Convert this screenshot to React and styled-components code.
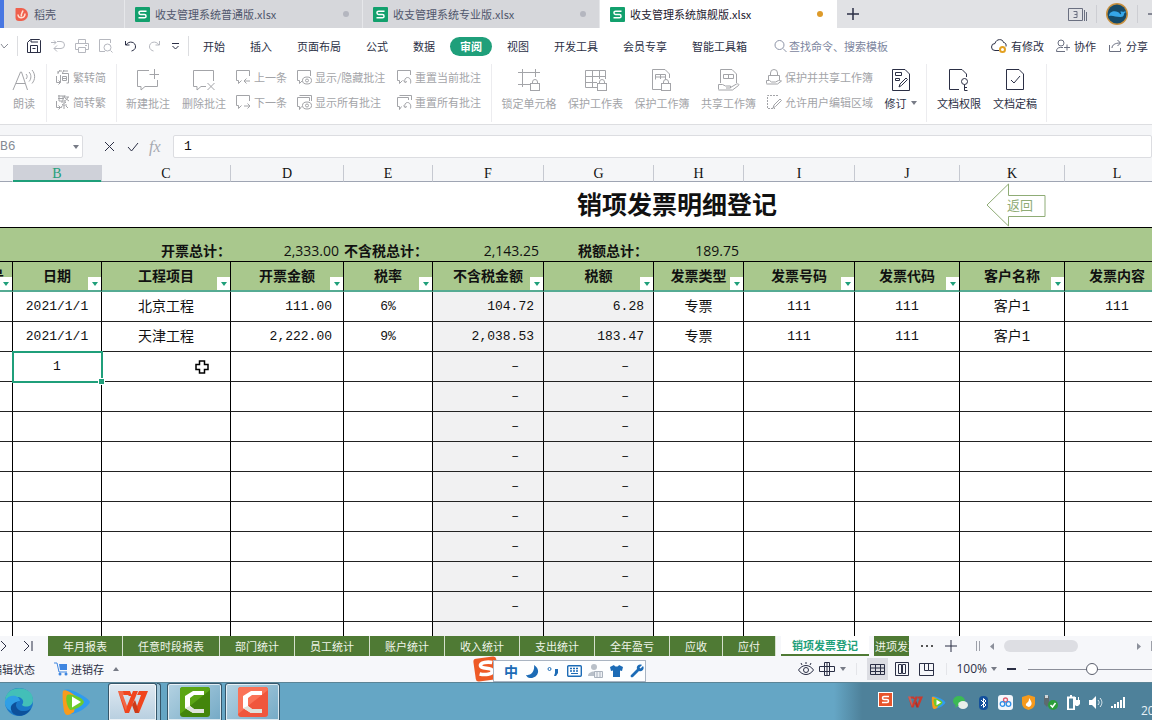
import React from "react";
import styled, { createGlobalStyle, css } from "styled-components";

const Global = createGlobalStyle`
  *, *::before, *::after { box-sizing: border-box; }
  body { margin: 0; font-family: "Noto Sans CJK SC", sans-serif; font-size: 11px; line-height: 16px; color: #2b2f45; background: #fff; }
  button, input { font: inherit; color: inherit; border: 0; background: none; padding: 0; margin: 0; }
  button { white-space: nowrap; }
  svg { display: block; flex: none; }
`;

const teal = "#1f9f7a";
const sheetGreen = "#4f7a34";
const headGreen = "#a9c88d";
const mono = `"Liberation Mono", "Noto Sans CJK SC", monospace`;

const Page = styled.div`
  display: flex;
  flex-direction: column;
  height: 100vh;
  overflow: hidden;
  white-space: nowrap;
`;

/* ---------- document tabs ---------- */
const TabBar = styled.header`
  display: flex;
  flex: none;
  height: 28px;
  background: #e1e2e5;
`;
const HomeEdge = styled.div`
  flex: none;
  width: 4px;
  background: #4877e2;
`;
const DocTab = styled.button`
  display: flex;
  flex: none;
  align-items: center;
  gap: 5px;
  width: ${(p) => p.$width}px;
  padding: 0 13px 0 10px;
  border-right: 1px solid ${(p) => (p.$active ? "#fff" : "#e6e7ea")};
  background: ${(p) => (p.$active ? "#fff" : "#d6d7db")};
  color: ${(p) => (p.$active ? "#1d2030" : "#50566c")};
`;
const Dot = styled.span`
  width: 6px;
  height: 6px;
  margin-left: auto;
  border-radius: 50%;
  background: ${(p) => p.$color};
`;
const AddTab = styled.button`
  display: grid;
  place-items: center;
  width: 32px;
`;
const WindowTools = styled.div`
  display: flex;
  align-items: center;
  margin-left: auto;
  gap: 8px;
`;
const Rule = styled.span`
  flex: none;
  width: 1px;
  height: ${(p) => p.$h}px;
  background: ${(p) => p.$color || "#dcdde0"};
`;

/* ---------- menu ---------- */
const MenuRow = styled.nav`
  display: flex;
  flex: none;
  align-items: center;
  height: 36px;
`;
const QuickTools = styled.div`
  display: flex;
  align-items: center;
  gap: 8px;
  padding-left: 8px;
`;
const IconButton = styled.button`
  display: grid;
  place-items: center;
  width: ${(p) => p.$w || 16}px;
  height: ${(p) => p.$h || 20}px;
  background: ${(p) => (p.$on ? "#dcdde3" : "none")};
`;
const MenuItems = styled.div`
  display: flex;
  gap: 5px;
  padding-left: 4px;
`;
const MenuItem = styled.button`
  height: 19px;
  padding: 0 10px;
  border-radius: 10px;
  line-height: 18px;
  ${(p) => p.$active && css`background: ${teal}; color: #fff; font-weight: 700;`}
`;
const Search = styled.label`
  display: flex;
  align-items: center;
  gap: 2px;
  margin-left: 17px;
  input { width: 110px; height: 20px; }
  input::placeholder { color: #7c859e; opacity: 1; }
`;
const Share = styled.div`
  display: flex;
  gap: 12px;
  margin-left: auto;
  padding-right: 4px;
`;
const ShareButton = styled.button`
  display: flex;
  align-items: center;
  gap: 4px;
`;

/* ---------- ribbon ---------- */
const Ribbon = styled.section`
  display: flex;
  flex: none;
  height: 61px;
  border-bottom: 1px solid #dddee1;
`;
const Group = styled.div`
  display: flex;
  flex: none;
  height: 58px;
  padding: 5px ${(p) => p.$pr || 0}px 0 ${(p) => p.$pl || 0}px;
  border-right: 1px solid #ececef;
`;
const BigButton = styled.button`
  display: flex;
  flex-direction: column;
  align-items: center;
  gap: 4px;
  width: ${(p) => p.$w}px;
  color: ${(p) => (p.$enabled ? "#2b2f45" : "#a3a4a8")};
  span { display: flex; align-items: center; gap: 4px; }
`;
const SmallStack = styled.div`
  display: flex;
  flex-direction: column;
  gap: 9px;
  width: ${(p) => p.$w}px;
  margin-left: ${(p) => p.$ml || 0}px;
`;
const SmallButton = styled.button`
  display: flex;
  align-items: center;
  gap: 3px;
  height: 16px;
  color: #a3a4a8;
`;

/* ---------- formula bar ---------- */
const FormulaBar = styled.div`
  display: flex;
  flex: none;
  height: 40px;
  padding-top: 10px;
  background: #f5f6f8;
`;
const NameBox = styled.label`
  display: flex;
  align-items: center;
  flex: none;
  width: 87px;
  height: 23px;
  margin-left: -4px;
  padding: 0 3px;
  border: 1px solid #dcdde1;
  border-radius: 2px;
  background: #fff;
  font: 13px ${mono};
  color: #858a94;
  input { flex: 1; min-width: 0; }
`;
const FormulaTools = styled.div`
  display: flex;
  align-items: center;
  gap: 8px;
  height: 23px;
  padding: 0 8px 0 18px;
`;
const Fx = styled.span`
  width: 16px;
  font: italic 16px "Liberation Serif", serif;
  color: #a6a9b0;
`;
const FormulaInput = styled.input`
  flex: 1;
  height: 23px;
  padding-left: 10px;
  border: 1px solid #dcdde1;
  border-radius: 2px;
  background: #fff;
  font: 13px ${mono};
  color: #111;
`;

/* ---------- sheet ---------- */
const SheetArea = styled.main`
  flex: 1;
  min-height: 0;
  overflow: hidden;
  background: #fff;
`;
const Sheet = styled.table`
  width: 100%;
  table-layout: fixed;
  border-collapse: separate;
  border-spacing: 0;
  color: #111;
  th, td { padding: 0; }
`;
const Letter = styled.th`
  height: 17px;
  border-right: 1px solid ${(p) => (p.$edge ? "#c6c9d1" : "transparent")};
  border-bottom: 1px solid #9fa5b3;
  background: #f5f6f8;
  font: 14px/14px "Liberation Serif", serif;
  && { padding-top: 2px; }
  ${(p) => p.$on && css`
    background: #cfd1d9;
    color: ${teal};
    border-bottom-color: ${teal};
    box-shadow: inset 0 -1px ${teal};
  `}
`;
const TitleCell = styled.td`
  height: 46px;
  border-bottom: 1px solid #000;
  font-size: 25px;
  line-height: 42px;
  font-weight: 700;
  && { padding-left: ${(p) => p.$pl || 0}px; padding-bottom: ${(p) => (p.$pl ? 3 : 0)}px; }
`;
const SumCell = styled.td`
  height: 34px;
  border-bottom: 1px solid #000;
  background: ${headGreen};
  vertical-align: bottom;
  text-align: ${(p) => p.$align || "right"};
  font: ${(p) => (p.$label ? 700 : 400)} 14px/20px "Open Sans", "Noto Sans CJK SC", sans-serif;
  && { padding-right: ${(p) => p.$pr || 0}px; }
`;
const HeadCell = styled.th`
  position: relative;
  height: 30px;
  border-right: 1px solid #000;
  border-bottom: 2px solid #56ab93;
  background: ${headGreen};
  font-size: 14px;
  line-height: 26px;
  && { padding-bottom: 2px; }
`;
const Clip = styled.div`
  display: flex;
  justify-content: flex-end;
  overflow: hidden;
  padding-right: 8px;
`;
const Filter = styled.button`
  position: absolute;
  right: 0;
  bottom: 0;
  display: grid;
  place-items: center;
  width: 13px;
  height: 13px;
  background: #fff;
`;
const Cell = styled.td`
  position: relative;
  height: 30px;
  border-right: 1px solid #000;
  border-bottom: 1px solid #222;
  background: ${(p) => (p.$shade ? "#f1f1f2" : "#fff")};
  text-align: ${(p) => (p.$right ? "right" : "center")};
  font: ${(p) => (p.$cjk ? 14 : 13)}px/28px ${mono};
  && { padding-top: 1px; padding-right: ${(p) => p.$right || 0}px; }
  ${(p) => p.$selected && css`outline: 2px solid ${teal}; outline-offset: -1px; z-index: 1;`}
`;
const Handle = styled.span`
  position: absolute;
  right: -3px;
  bottom: -3px;
  width: 5px;
  height: 5px;
  background: ${teal};
  box-shadow: 0 0 0 1px #fff;
`;
const Pointer = styled.span`
  position: absolute;
  right: 20px;
  top: 7px;
`;
const BackLink = styled.a`
  display: grid;
  width: 60px;
  height: 44px;
  margin-left: 26px;
  color: #8fac76;
  text-decoration: none;
  font: 400 13px/44px "Noto Sans CJK SC", sans-serif;
  > * { grid-area: 1 / 1; }
  span { padding-left: 21px; }
`;

/* ---------- sheet tabs ---------- */
const SheetTabs = styled.nav`
  display: flex;
  flex: none;
  align-items: stretch;
  height: 20px;
  background: #f6f7fa;
`;
const TabNav = styled.div`
  display: flex;
  align-items: center;
  gap: 13px;
  width: 48px;
`;
const SheetTab = styled.button`
  flex: none;
  overflow: hidden;
  padding: 0 15px;
  border-right: 1px solid #d5e0cd;
  background: ${sheetGreen};
  color: #eff5ea;
  line-height: 20px;
  ${(p) => p.$active && css`
    margin: 0 5px;
    padding: 0 11px;
    border-right: 0;
    border-bottom: 2px solid ${sheetGreen};
    background: #fff;
    color: ${teal};
    font-weight: 700;
    line-height: 18px;
  `}
  ${(p) => p.$cut && css`
    width: 35px;
    padding: 0 0 0 1px;
    border-right: 0;
    text-align: left;
  `}
`;
const TabTools = styled.div`
  display: flex;
  align-items: center;
  gap: 11px;
  padding-left: 12px;
`;
const Scroller = styled.div`
  display: flex;
  flex: 1;
  align-items: center;
  gap: 8px;
  margin-left: 19px;
`;
const Track = styled.div`
  flex: 1;
  height: 12px;
`;
const Thumb = styled.div`
  width: 60%;
  height: 12px;
  border-radius: 6px;
  background: #dddee3;
`;

/* ---------- status bar ---------- */
const StatusBar = styled.footer`
  position: relative;
  display: flex;
  flex: none;
  align-items: center;
  height: 26px;
  background: #f6f7fa;
`;
const StatusText = styled.span`
  margin-left: -9px;
`;
const Stock = styled.button`
  display: flex;
  align-items: center;
  gap: 3px;
  margin-left: 19px;
  svg:last-child { margin-left: 6px; }
`;
const ViewTools = styled.div`
  display: flex;
  align-items: center;
  gap: 5px;
  margin-left: auto;
`;
const Zoom = styled.label`
  display: flex;
  align-items: center;
  font-family: "Open Sans", sans-serif;
  font-size: 12px;
  gap: 4px;
`;
const Slider = styled.input`
  appearance: none;
  width: 124px;
  height: 14px;
  margin-left: 3px;
  background: linear-gradient(#8b8e99, #8b8e99) center / 100% 1px no-repeat;
  &::-webkit-slider-thumb {
    appearance: none;
    width: 12px;
    height: 12px;
    border: 1px solid #5a5e6c;
    border-radius: 50%;
    background: #fff;
  }
`;
const ImeBar = styled.div`
  position: absolute;
  left: 473px;
  top: 0;
  z-index: 2;
  display: flex;
  align-items: center;
  height: 26px;
`;
const ImeTools = styled.div`
  display: flex;
  align-items: center;
  gap: 5px;
  height: 22px;
  margin: 4px 0 0 -6px;
  padding-left: 9px;
  border: 1px solid #a9b4c2;
  background: #fdfeff;
  color: #1c6bb6;
`;
const ImeMode = styled.button`
  width: 16px;
  font-size: 14px;
  font-weight: 700;
`;

/* ---------- taskbar ---------- */
const TaskBar = styled.footer`
  display: flex;
  flex: none;
  justify-content: space-between;
  height: 38px;
  border-top: 1px solid #5b8496;
  background: #65a6c5;
`;
const Apps = styled.div`
  display: flex;
`;
const AppButton = styled.button`
  display: grid;
  place-items: center;
  width: ${(p) => p.$w}px;
  margin-right: ${(p) => p.$mr || 0}px;
  ${(p) => p.$framed && css`
    border: 1px solid #35566a;
    border-bottom: 0;
    border-radius: 3px 3px 0 0;
    box-shadow: inset 0 0 0 1px rgba(255, 255, 255, 0.7);
    background: ${p.$front ? "linear-gradient(#dfe9f2, #b8cfe0)" : "linear-gradient(135deg, #b4d2e2, #74aac6)"};
  `}
`;
const StackEdge = styled.span`
  width: 4px;
  margin-right: 6px;
  border: 1px solid #35566a;
  border-width: 1px 1px 0 0;
  border-radius: 0 3px 0 0;
  background: #9cc3d8;
`;
const Tray = styled.div`
  display: flex;
  width: 318px;
  padding-left: 44px;
  background: linear-gradient(90deg, #65a6c5, #4e819a 28px);
`;
const TrayIcons = styled.div`
  display: flex;
  flex: none;
  justify-content: space-between;
  align-items: center;
  width: 218px;
  height: 38px;
  margin-left: 15px;
`;
const TrayIme = styled.div`
  padding-top: 9px;
`;
const Clock = styled.time`
  align-self: flex-end;
  width: 11px;
  margin-left: 15px;
  overflow: hidden;
  color: #e8f1f6;
  font: 12px/18px "Open Sans", sans-serif;
`;

/* ---------- drawings ---------- */
const Svg = ({ w = 16, h = 16, sw = 1, children, ...rest }) => (
  <svg width={w} height={h} viewBox={`0 0 ${w} ${h}`} fill="none" stroke="currentColor" strokeWidth={sw} aria-hidden="true" {...rest}>
    {children}
  </svg>
);
const Caret = ({ color = "#777b86", up }) => (
  <Svg w={6} h={4} stroke="none" fill={color}><path d={up ? "M0 4h6L3 0z" : "M0 0h6L3 4z"} /></Svg>
);
const SheetLogo = () => (
  <Svg w={15} h={15} stroke="none">
    <rect width="15" height="15" rx="1" fill="#12a06d" />
    <path d="M11.500 4.200H5.600a1.600 1.600 0 0 0 0 3.300h3.800a1.600 1.600 0 0 1 0 3.300H3.500" stroke="#fff" strokeWidth="1.500" />
  </Svg>
);
const DocerLogo = () => (
  <Svg w={15} h={15} stroke="none">
    <path d="M2 1h5.500a6.500 6.500 0 0 1 0 13H5a3.500 3.500 0 0 1-3.500-3.500V1.500z" fill="#ef5f4c" />
    <path d="M9 3.500c-1 3-2.500 4-1.500 6M4 7.500c0 5 7 4 7-1" stroke="#ffe1d2" strokeWidth="1.500" />
  </Svg>
);
const BubblePrev = () => <Svg><path d="M14.500 7V1.500H1.500v10h2v3l3-3M15 12H9m2.500-2.500L9 12l2.500 2.500" /></Svg>;
const BubbleNext = () => <Svg><path d="M14.500 7V1.500H1.500v10h2v3l3-3M9 12h6m-2.500-2.500L15 12l-2.500 2.500" /></Svg>;
const BubbleEye = ({ double }) => (
  <Svg>
    <path d={double ? "M13.500 7V3.500H1.500v9h2v3l2-3M3.500 1.500h12V7" : "M14.500 7V1.500H1.500v10h2v3l3-3"} />
    <ellipse cx="11" cy="11.500" rx="4.500" ry="3.500" /><circle cx="11" cy="11.500" r="1.500" />
  </Svg>
);
const BubbleReset = ({ double }) => (
  <Svg>
    <path d={double ? "M12.500 6V3.500H1.500v9h2v3l2-3M3.500 1.500h12V6" : "M14.500 6V1.500H1.500v10h2v3l3-3"} />
    <path d="M9 13.500c-1-3 .5-5 2.500-5s4 2 3 6M7.500 11.500l1.500 2 2-1" />
  </Svg>
);
const LockShape = ({ x, y }) => (
  <g transform={`translate(${x} ${y})`}><rect x=".5" y="4.500" width="9" height="7" fill="#fff" /><path d="M2.500 4.500V3a2.500 2.500 0 0 1 5 0v1.500" /></g>
);
const Turn = ({ kind }) => (
  <Svg>
    <path d="M2.500 7v6.500h4M4.500 11.500l2 2-2 2" />
    {kind === "simple"
      ? <path d="M4 2v3M6 1l-2 3M5 2h3M10 1L8.500 4M9 2h5M6.500 6v7M8 4.500h6.500v9.500h-2M8.500 7.500h4v4h-4zM8.500 9.500h4" />
      : <path d="M4 2h6M5 1v6h4V2M4 4.500h6M11 1l-1 3M10 3h5M14 3c-.5 2-2 3.500-4 4M11 4l4 3M7 8h5l-4 3h5M10 11v4M8 12l-1 2M12 12l2 2" />}
  </Svg>
);
const CamLogo = ({ color, dark }) => (
  <Svg w={30} h={30} stroke="none">
    <rect width="30" height="30" rx="3" fill={dark} />
    <path d="M3 0h24a3 3 0 0 1 3 3L0 27V3a3 3 0 0 1 3-3z" fill={color} />
    <path d="M24 4H13L5 9v12l8 5h11v-4H14l-4-3v-8l4-3h10z" fill="#fff" />
    <path d="M13 26l-8-5 5-2 4 3h10v4z" fill="#dfe3dc" />
  </Svg>
);
const PlayLogo = ({ s }) => (
  <svg width={s} height={s} viewBox="0 0 30 30" aria-hidden="true">
    <path d="M3 3c5-3 24 7 26 12-2 5-13 12-19 12z" fill="#2f9bf0" />
    <path d="M2 4c2-2 7 1 14 6l-3 15c-7 5-9 3-10-1-1-6-2-16-1-20z" fill="#f99b1c" />
    <path d="M6 8c5-2 16 3 17 7-1 4-9 8-14 8-3-3-5-12-3-15z" fill="#6ccb2b" />
    <path d="M11 9.500v11l9-5.500z" fill="#fff" />
  </svg>
);
const WpsLogo = ({ w, h, color = "#f0451e" }) => (
  <svg width={w} height={h} viewBox="0 0 30 24" aria-hidden="true">
    <path d="M0 1h12l2 5h-3l-1-1H5l4 11 6-15h5l-9 22H7z" fill={color} />
    <path d="M14 15l3 8h4L30 1h-9l-2 4h4l-4 11-2-6z" fill={color} />
    <path d="M0 1h5l4 15-1 5z" fill="#fff" opacity=".18" />
    <path d="M19 16l2 7h-4l-3-8 3-5z" opacity=".15" />
  </svg>
);
const SogouLogo = ({ s }) => (
  <svg width={s} height={s} viewBox="0 0 26 26" aria-hidden="true">
    <g transform="rotate(-8 13 13)"><rect x="1.500" y="1.500" width="23" height="23" rx="3" fill="#ee5a26" />
      <path d="M20 7.500c-4-1.500-12-2-12 1.500 0 4 11 2.500 11 6.500 0 4-8 3.500-13 1.500" fill="none" stroke="#fff" strokeWidth="3.600" /></g>
  </svg>
);

/* ---------- data ---------- */
const docTabs = [
  { name: "收支管理系统普通版.xlsx", w: 238, dot: "#b4b6bf" },
  { name: "收支管理系统专业版.xlsx", w: 237, dot: "#b4b6bf" },
  { name: "收支管理系统旗舰版.xlsx", w: 237, dot: "#dd9a2a", active: true },
];
const menus = ["开始", "插入", "页面布局", "公式", "数据", "审阅", "视图", "开发工具", "会员专享", "智能工具箱"];
const columns = [
  ["", 13, "编号"], ["B", 89, "日期"], ["C", 129, "工程项目"], ["D", 113, "开票金额"], ["E", 89, "税率"], ["F", 111, "不含税金额"],
  ["G", 110, "税额"], ["H", 90, "发票类型"], ["I", 111, "发票号码"], ["J", 105, "发票代码"], ["K", 105, "客户名称"], ["L", 105, "发票内容"],
];
const emptyRow = Array(12).fill("");
const dashRow = ["", "", "", "", "", "–", "–", "", "", "", "", ""];
const rows = [
  ["", "2021/1/1", "北京工程", "111.00", "6%", "104.72", "6.28", "专票", "111", "111", "客户1", "111"],
  ["", "2021/1/1", "天津工程", "2,222.00", "9%", "2,038.53", "183.47", "专票", "111", "111", "客户1", ""],
  ["", "1", ...dashRow.slice(2)],
  ...Array(8).fill(dashRow),
  ...Array(20).fill(emptyRow),
];
const cjkCols = [2, 7, 10];
const rightPad = (col, value) => (value === "–" ? 24 : col === 3 ? 11 : col === 5 || col === 6 ? 9 : 0);
const sheetTabs = ["年月报表", "任意时段报表", "部门统计", "员工统计", "账户统计", "收入统计", "支出统计", "全年盈亏", "应收", "应付"];

function TopTabs() {
  return (
    <TabBar>
      <HomeEdge />
      <DocTab $width={121}><DocerLogo />稻壳</DocTab>
      {docTabs.map((t) => (
        <DocTab key={t.name} $width={t.w} $active={t.active}><SheetLogo />{t.name}<Dot $color={t.dot} /></DocTab>
      ))}
      <AddTab aria-label="新建"><Svg w={12} h={12} sw={1.500}><path d="M6 0v12M0 6h12" /></Svg></AddTab>
      <WindowTools>
        <IconButton $w={20} aria-label="窗口"><Svg w={20} h={15} color="#6a6f80">
          <path d="M.5 1.500h14v12H.5zM16.500 3v11M18.500 5v9" />
          <path d="M5.500 4.500h3.500v6H5.500M6.500 7.500H9" />
        </Svg></IconButton>
        <Rule $h={18} $color="#cdced3" />
        <Svg w={24} h={24} stroke="none">
          <circle cx="12" cy="12" r="11" fill="#c78f3d" /><circle cx="12" cy="12" r="9.500" fill="#164a68" />
          <path d="M4 14c0-6 9-6 11-2 2 1 1-2 0-2 2-1 3 0 3 0s2-1 3 0c-1 1-2 1-2 2 0 3-3 3-4 3-5 0-7-2-11-1z" fill="#36a6e8" />
        </Svg>
        <Rule $h={18} $color="#cdced3" />
        <IconButton $w={6} aria-label="最小化"><Svg w={6} h={2}><path d="M2 1h4" /></Svg></IconButton>
      </WindowTools>
    </TabBar>
  );
}

function Menu() {
  const pale = { color: "#b6b8bf" };
  return (
    <MenuRow>
      <IconButton $w={9} aria-label="文件"><Svg w={9} h={6} color="#8a8d96"><path d="M1 1l3 4 4-4" /></Svg></IconButton>
      <QuickTools>
        <Rule $h={20} />
        <IconButton aria-label="保存"><Svg w={14} h={14}><path d="M.5 3.500l3-3h9l1 1v12H.5zM4 .5v2.500h7M3.500 13.500v-7h7v7M5.500 9.500h3" /></Svg></IconButton>
        <IconButton aria-label="输出"><Svg w={14} h={14} {...pale}><path d="M0 3.500h5M3 1.500l2 2-2 2M6 2.500h4a3.500 3.500 0 0 1 0 7H3M6 6.500l-3 3 3 3" /></Svg></IconButton>
        <IconButton aria-label="打印"><Svg w={14} h={14} {...pale}><path d="M3.500 4V.5h7V4M3 10.500H.5v-6h13v6H11M3.500 8.500h7v5h-7zM10 6.500h2" /></Svg></IconButton>
        <IconButton aria-label="预览"><Svg w={14} h={14} {...pale}><path d="M6 12.500H.5V.5h11V4M11.500 11.500l2 2" /><circle cx="8.500" cy="8.500" r="3.500" /></Svg></IconButton>
        <IconButton aria-label="撤销"><Svg w={13} h={12}><path d="M1.500 1v4h4M2 5c3-5 10-3 9.500 2 0 2-2 3.500-4 4" /></Svg></IconButton>
        <IconButton aria-label="恢复"><Svg w={13} h={12} {...pale}><path d="M11.500 1v4h-4M11 5C8 0 1 2 1.500 7c0 2 2 3.500 4 4" /></Svg></IconButton>
        <IconButton $w={10} aria-label="更多"><Svg w={9} h={8}><path d="M1 1.500h7M1.500 4l3 3 3-3" /></Svg></IconButton>
        <Rule $h={20} />
      </QuickTools>
      <MenuItems>{menus.map((m) => <MenuItem key={m} $active={m === "审阅"}>{m}</MenuItem>)}</MenuItems>
      <Search>
        <Svg w={13} h={14} color="#8e95a8"><circle cx="5.500" cy="6" r="4.500" /><path d="M9 9.500l3.500 3.500" /></Svg>
        <input aria-label="查找命令" placeholder="查找命令、搜索模板" />
      </Search>
      <Share>
        <ShareButton><Svg><path d="M8 12.500H4a3.500 3.500 0 0 1 0-7c1-5 8-5 8.500-1 2 0 3 2 2.500 4" /><circle cx="11.500" cy="11.500" r="2.500" stroke="#e3a122" strokeWidth="2" /></Svg>有修改</ShareButton>
        <ShareButton><Svg w={14} h={14} color="#6a6f80"><circle cx="5" cy="4" r="3" /><path d="M9 12.500H.5c0-3 1.500-4 4-4H7M8 8.500h6M11 5.500v6" /></Svg>协作</ShareButton>
        <ShareButton><Svg w={14} h={14} color="#6a6f80"><path d="M1.500 6v6.500h11V9M4 9c0-3 3-5 8-5M9.500 1l3 3-3 3" /></Svg>分享</ShareButton>
      </Share>
    </MenuRow>
  );
}

function Small({ icon, children }) {
  return <SmallButton>{icon}{children}</SmallButton>;
}

function ReviewRibbon() {
  return (
    <Ribbon>
      <Group $pl={2}>
        <BigButton $w={44}><Svg w={24} h={22}><path d="M1 21L8.500 3h1l6 18M4 14.500h9M14 5c1.500 1.500 1.500 3.500 0 5M17 3c2.500 2.500 2.500 7 0 9.500M20 1c3.500 4 3.500 9.500 0 13.500" /></Svg><span>朗读</span></BigButton>
      </Group>
      <Group $pl={7}>
        <SmallStack $w={62}>
          <Small icon={<Turn kind="simple" />}>繁转简</Small>
          <Small icon={<Turn kind="full" />}>简转繁</Small>
        </SmallStack>
      </Group>
      <Group $pl={3} $pr={9}>
        <BigButton $w={56}><Svg w={22} h={22}><path d="M12 1.500H.5v16H4v3.500l4-3.500h12.500V11M17.500 0v10M12.500 5.500h9.500" /></Svg><span>新建批注</span></BigButton>
        <BigButton $w={56}><Svg w={22} h={22}><path d="M20.500 12V1.500H.5v16H4v3.500l4-3.500h5M14.500 14l7 7M21.500 14l-7 7" /></Svg><span>删除批注</span></BigButton>
        <SmallStack $w={61} $ml={3}>
          <Small icon={<BubblePrev />}>上一条</Small>
          <Small icon={<BubbleNext />}>下一条</Small>
        </SmallStack>
        <SmallStack $w={100}>
          <Small icon={<BubbleEye />}>显示/隐藏批注</Small>
          <Small icon={<BubbleEye double />}>显示所有批注</Small>
        </SmallStack>
        <SmallStack $w={86}>
          <Small icon={<BubbleReset />}>重置当前批注</Small>
          <Small icon={<BubbleReset double />}>重置所有批注</Small>
        </SmallStack>
      </Group>
      <Group $pl={4} $pr={9}>
        <BigButton $w={66}><Svg w={22} h={22}><path d="M4.500 0v18M17.500 0v8M0 3.500h22M0 15.500h12" /><LockShape x={12} y={10} /></Svg><span>锁定单元格</span></BigButton>
        <BigButton $w={67}><Svg w={22} h={22}><path d="M12 18.500H.5V1.500h20V10M7.500 1.500v17M14.500 1.500V10M.5 7.500h20M.5 13.500H12" /><LockShape x={12} y={10} /></Svg><span>保护工作表</span></BigButton>
        <BigButton $w={66}><Svg w={20} h={22}><path d="M9 20.500H.5V.5H13l4.500 4.500V9M3.500 10.500v-5h10v5M3.500 8h10M8.500 5.500V10" /><LockShape x={9} y={10} /></Svg><span>保护工作簿</span></BigButton>
        <BigButton $w={67}><Svg w={22} h={22}><path d="M2.500 14V.5H14l4.500 4.500v9M5.500 9.500v-4h10v4zM10.500 5.500v4M.5 20.500v-5h4l3 1.500h5v2H8M12.500 18.500l6-3.500c2-.5 3 .5 2 1.500l-6 4.500H.5" /></Svg><span>共享工作簿</span></BigButton>
        <SmallStack $w={118} $ml={4}>
          <Small icon={<Svg><path d="M4.500 6.500V4a3.500 3.500 0 0 1 7 0v2.500M2.500 11V6.500h11V11M.5 14.500v-3h3l2 1.500h4l3-1.500 3 .5-4 3H.5" /></Svg>}>保护并共享工作簿</Small>
          <Small icon={<Svg><path d="M12 1.500H1.500v13H9" strokeDasharray="2 1" /><path d="M7 14l1-3 6-6 1.500 1.500-6 6z" /></Svg>}>允许用户编辑区域</Small>
        </SmallStack>
        <BigButton $w={33} $enabled><Svg w={18} h={22}><path d="M.5.5H13l4.500 4.500v16.500H.5zM3.500 3.500h6v3h-6zM3.500 9.500h4v2h-4zM7 18l1-3 6-6 1.500 1.500-6 6z" /></Svg><span>修订<Caret /></span></BigButton>
      </Group>
      <Group $pl={4} $pr={3}>
        <BigButton $w={56} $enabled><Svg w={20} h={22}><path d="M10 20.500H.5V.5H13l4.500 4.500v3" /><circle cx="15.500" cy="12.500" r="3" /><path d="M15.500 15.500v6h3M15.500 18.500h2.500" /></Svg><span>文档权限</span></BigButton>
        <BigButton $w={56} $enabled><Svg w={18} h={22}><path d="M.5.5H13l4.500 4.500v15.500H.5zM5 11l3 3 6-7" /></Svg><span>文档定稿</span></BigButton>
      </Group>
    </Ribbon>
  );
}

function Grid() {
  return (
    <SheetArea>
      <Sheet>
        <colgroup>
          {columns.map((c) => <col key={c[2]} style={{ width: c[1] }} />)}
          <col />
        </colgroup>
        <thead>
          <tr>{columns.map((c) => <Letter key={c[2]} scope="col" $edge={c[1] > 89 || c[0] === "E"} $on={c[0] === "B"}>{c[0]}</Letter>)}<Letter as="td" /></tr>
        </thead>
        <tbody>
          <tr>
            <TitleCell colSpan={6} />
            <TitleCell colSpan={4} $pl={33}>销项发票明细登记</TitleCell>
            <TitleCell colSpan={3}>
              <BackLink href="#home">
                <Svg w={60} h={44}><path d="M1 22L22.500 1v11.500H59v21H22.500V43z" /></Svg>
                <span>返回</span>
              </BackLink>
            </TitleCell>
          </tr>
          <tr>
            <SumCell colSpan={3} $label>开票总计：</SumCell>
            <SumCell $pr={5}>2,333.00</SumCell>
            <SumCell $label $align="left">不含税总计：</SumCell>
            <SumCell $pr={5}>2,143.25</SumCell>
            <SumCell $label $pr={6}>税额总计：</SumCell>
            <SumCell $pr={5}>189.75</SumCell>
            <SumCell colSpan={5} />
          </tr>
          <tr>
            {columns.map((c, i) => (
              <HeadCell key={c[2]} scope="col">
                {i === 0 ? <Clip>{c[2]}</Clip> : c[2]}
                <Filter aria-label={`筛选${c[2]}`}><Caret color={teal} /></Filter>
              </HeadCell>
            ))}
            <HeadCell as="td" />
          </tr>
          {rows.map((r, y) => (
            <tr key={y}>
              {r.map((v, x) => {
                const selected = y === 2 && x === 1;
                return (
                  <Cell key={x} $shade={x === 5 || x === 6} $right={rightPad(x, v)} $cjk={cjkCols.includes(x)} $selected={selected}>
                    {v}
                    {selected && <Handle />}
                    {y === 2 && x === 2 && (
                      <Pointer><Svg w={16} h={16} color="#000" sw={1.500}><path d="M5.500 2h5v3.500H14v5h-3.500V14h-5v-3.500H2v-5h3.500z" fill="#fff" /></Svg></Pointer>
                    )}
                  </Cell>
                );
              })}
              <Cell />
            </tr>
          ))}
        </tbody>
      </Sheet>
    </SheetArea>
  );
}

function BottomTabs() {
  return (
    <SheetTabs>
      <TabNav>
        <IconButton $w={9} aria-label="下一张"><Svg w={9} h={12}><path d="M1 1l5 5-5 5" /></Svg></IconButton>
        <IconButton $w={12} aria-label="最后一张"><Svg w={10} h={12}><path d="M1 1l5 5-5 5M9 1v10" /></Svg></IconButton>
      </TabNav>
      {sheetTabs.map((t) => <SheetTab key={t}>{t}</SheetTab>)}
      <SheetTab $active>销项发票登记</SheetTab>
      <SheetTab $cut>进项发票登记</SheetTab>
      <TabTools>
        <IconButton $w={13} aria-label="更多工作表"><Svg w={13} h={3} stroke="none" fill="#555"><path d="M0 0h2v2H0zM5 0h2v2H5zM10 0h2v2h-2z" /></Svg></IconButton>
        <IconButton $w={12} aria-label="新建工作表"><Svg w={12} h={12}><path d="M6 0v12M0 6h12" /></Svg></IconButton>
      </TabTools>
      <Scroller>
        <Svg w={4} h={10} color="#9da0a9"><path d="M.5 0v10M3.500 0v10" /></Svg>
        <IconButton $w={8} aria-label="向左"><Svg w={5} h={7} stroke="none" fill="#8c909b"><path d="M4 0v7L0 3.500z" /></Svg></IconButton>
        <Track><Thumb /></Track>
        <IconButton $w={8} aria-label="向右"><Svg w={5} h={7} stroke="none" fill="#8c909b"><path d="M0 0v7l4-3.500z" /></Svg></IconButton>
        <Rule $h={10} $color="#9da0a9" />
      </Scroller>
    </SheetTabs>
  );
}

function Status() {
  return (
    <StatusBar>
      <StatusText>编辑状态</StatusText>
      <Stock>
        <Svg w={14} h={14} stroke="none"><path d="M0 1h3l2 9h8" stroke="#3f86e0" /><path d="M5 2h8v6H6z" fill="#3f86e0" /><circle cx="6" cy="12" r="1.500" fill="#3f86e0" /><circle cx="12" cy="12" r="1.500" fill="#3f86e0" /></Svg>
        进销存
        <Caret up />
      </Stock>
      <ImeBar>
        <SogouLogo s={26} />
        <ImeTools>
          <ImeMode>中</ImeMode>
          <IconButton aria-label="半角"><Svg w={13} h={13} stroke="none" fill="currentColor"><path d="M8 0c8 5 3 14-4 13-2 0-3-1-4-3 5 1 9-4 8-10z" /></Svg></IconButton>
          <IconButton aria-label="标点"><Svg w={12} h={12}><circle cx="2.500" cy="4" r="1.500" /><path d="M8 4h3v4l-2 3H7l1-3z" fill="currentColor" stroke="none" /></Svg></IconButton>
          <IconButton aria-label="键盘"><Svg w={15} h={12}><rect x=".7" y=".7" width="13.600" height="10.600" rx="1" strokeWidth="1.400" /><path d="M3 3.500h9M3 6h9" strokeDasharray="2 1" strokeWidth="1.400" /><path d="M4 8.500h7" /></Svg></IconButton>
          <IconButton aria-label="用户"><Svg w={15} h={14} stroke="none" fill="#b9c0c9"><circle cx="6" cy="3" r="3" /><path d="M0 12c0-6 12-6 12 0z" /><path d="M6.500 7.500h8v6h-8zM9 8v5M12 8v5" fill="#eef1f5" stroke="#aab2bd" /></Svg></IconButton>
          <IconButton aria-label="皮肤"><Svg w={13} h={12} stroke="none" fill="currentColor"><path d="M4 0c1 2 4 2 5 0l4 2-1 4-2-.5V12H3V5.500L1 6 0 2z" /></Svg></IconButton>
          <IconButton aria-label="工具"><Svg w={14} h={14} stroke="none" fill="currentColor"><path d="M12 1L9.500 3.500l1 1L13 2c2 3-1 6-4 5l-6 6c-2 1-3-1-2-2l6-6C6 2 9-.5 12 1z" /></Svg></IconButton>
        </ImeTools>
      </ImeBar>
      <ViewTools>
        <IconButton aria-label="护眼模式"><Svg w={16} h={14}><path d="M.5 8c4-6 11-6 15 0-4 6-11 6-15 0zM8 0v2M3 1l1 2M13 1l-1 2" /><circle cx="8" cy="8" r="2.500" /></Svg></IconButton>
        <IconButton aria-label="阅读模式"><Svg w={16} h={14}><path d="M5.500.5h5v13h-5zM.5 4.500h15v5H.5zM8 .5v13" /></Svg></IconButton>
        <Caret />
        <span />
        <Rule $h={12} $color="#e4e5e9" />
        <span />
        <IconButton $w={21} $h={22} $on aria-label="普通视图"><Svg w={15} h={11}><path d="M.5.5h14v10H.5zM5.500.5v10M10.500.5v10M.5 4h14M.5 7.500h14" /></Svg></IconButton>
        <IconButton $w={18} aria-label="分页预览"><Svg w={14} h={14}><path d="M.5.500h13v13H.5zM3.500 2.500v9h3v-9zM7.500 2.500h3v9h-3z" /></Svg></IconButton>
        <IconButton $w={20} aria-label="页面布局"><Svg w={15} h={13}><path d="M.5.5h14v12H.5zM5.500.5v7h4v-7M9.500 7.500h5" /></Svg></IconButton>
        <span />
        <Rule $h={12} $color="#e4e5e9" />
        <Zoom>
          <span />100%<Caret />
          <IconButton $w={20} aria-label="缩小"><Svg w={9} h={2} sw={2}><path d="M0 1h9" /></Svg></IconButton>
          <Slider type="range" min="0" max="200" defaultValue="104" />
        </Zoom>
      </ViewTools>
    </StatusBar>
  );
}

function Desktop() {
  return (
    <TaskBar>
      <Apps>
        <AppButton $w={38} $mr={19} aria-label="Edge"><svg width="30" height="30" viewBox="0 0 30 30" aria-hidden="true">
          <circle cx="15" cy="15" r="14" fill="#1a78c8" />
          <path d="M1 13C3-3 29-2 29 13c0 7-8 8-11 5 3-4 0-8-5-8-6 0-11 3-12 9z" fill="#43bfb8" />
          <path d="M1 14c3-7 14-7 15 0-5-1-8 6-3 11-8 0-13-5-12-11z" fill="#2f9fe6" />
          <path d="M13 15c-3 4 1 10 8 9 3 0 5-2 6-3-4 9-15 10-19 4-3-5 0-9 5-10z" fill="#0d519b" />
        </svg></AppButton>
        <AppButton $w={38} $mr={13} aria-label="腾讯视频"><PlayLogo s={30} /></AppButton>
        <AppButton $w={49} $framed $front aria-label="WPS"><WpsLogo w={30} h={24} /></AppButton>
        <StackEdge />
        <AppButton $w={55} $mr={3} $framed aria-label="Camtasia"><CamLogo color="#5ba514" dark="#43850b" /></AppButton>
        <AppButton $w={55} $framed aria-label="Camtasia 录制"><CamLogo color="#fa7358" dark="#f0563c" /></AppButton>
      </Apps>
      <Tray>
        <TrayIme><Svg w={15} h={15} stroke="none"><rect x=".5" y=".5" width="14" height="14" fill="#e8542a" stroke="#fff" /><path d="M11 4.500H6c-2 0-2 3 0 3h3c2 0 2 3 0 3H4" stroke="#fff" strokeWidth="1.500" /></Svg></TrayIme>
        <TrayIcons>
          <WpsLogo w={15} h={12} color="#c93a2e" />
          <PlayLogo s={15} />
          <Svg w={15} h={15} stroke="none"><ellipse cx="6" cy="6" rx="6" ry="5" fill="#3cba54" /><ellipse cx="10" cy="10" rx="5" ry="4" fill="#e8eeea" /><path d="M3 9l-1 4 4-3z" fill="#3cba54" /></Svg>
          <Svg w={15} h={15} stroke="none"><rect x="3" y="1" width="9" height="14" rx="4" fill="#14509c" /><path d="M5 5l5 5-2.500 2.500v-9L10 6l-5 5" stroke="#fff" /></Svg>
          <Svg w={15} h={15} stroke="none"><rect width="15" height="15" rx="3" fill="#f2f6fb" /><circle cx="7.500" cy="5" r="2" stroke="#e05a6c" strokeWidth="1.300" /><circle cx="4.500" cy="9" r="2.300" stroke="#2f8fe8" strokeWidth="1.300" /><circle cx="10.500" cy="9" r="2.300" stroke="#2f8fe8" strokeWidth="1.300" /></Svg>
          <Svg w={15} h={15} stroke="none"><path d="M7.500 0L14 2v6c0 4-3 6-6.500 7C4 14 1 12 1 8V2z" fill="#f59a1d" /><path d="M8 3c3 4 4 7 0 9-4-1-4-3-1-5 1-1 1-3 1-4z" fill="#fff" /></Svg>
          <Svg w={15} h={15} stroke="none"><path d="M1 1h5v8l-2 3-3-3z" fill="#5d6a70" /><path d="M2 0h3v3H2z" fill="#ccd4d8" /><circle cx="10" cy="10" r="5" fill="#2c9d3a" /><path d="M7.500 10l2 2 3-4" stroke="#fff" strokeWidth="1.500" /></Svg>
          <Svg w={15} h={15} stroke="none"><path d="M2 2.500h6v12H2zM4 1h2" stroke="#fff" strokeWidth="2" /><path d="M8 5h6v4l-2 2h-2l-2-2zM9 2h1v3H9zM12 2h1v3h-1z" fill="#fff" /></Svg>
          <Svg w={15} h={15} stroke="none"><path d="M1 5h3l4-4v13l-4-4H1z" fill="#fff" /><path d="M10 5c1.500 2 1.500 3 0 5M12 3c2.500 3 2.500 6 0 9" stroke="#e4eef3" /></Svg>
          <Svg w={15} h={15} stroke="none" fill="#fff"><path d="M0 11h2v2H0zM3 9h2v4H3zM6 7h2v6H6zM9 5h2v8H9zM12 2h2v11h-2z" /></Svg>
        </TrayIcons>
        <Clock>20</Clock>
      </Tray>
    </TaskBar>
  );
}

export default function App() {
  return (
    <Page>
      <Global />
      <TopTabs />
      <Menu />
      <ReviewRibbon />
      <FormulaBar>
        <NameBox><input aria-label="名称框" defaultValue="B6" /><Caret /></NameBox>
        <FormulaTools>
          <IconButton aria-label="取消"><Svg w={11} h={11}><path d="M1 1l9 9M10 1l-9 9" /></Svg></IconButton>
          <IconButton aria-label="输入"><Svg w={12} h={10}><path d="M1 5l3.500 4L11 1" /></Svg></IconButton>
          <Fx>fx</Fx>
        </FormulaTools>
        <FormulaInput aria-label="编辑栏" defaultValue="1" />
      </FormulaBar>
      <Grid />
      <BottomTabs />
      <Status />
      <Desktop />
    </Page>
  );
}
